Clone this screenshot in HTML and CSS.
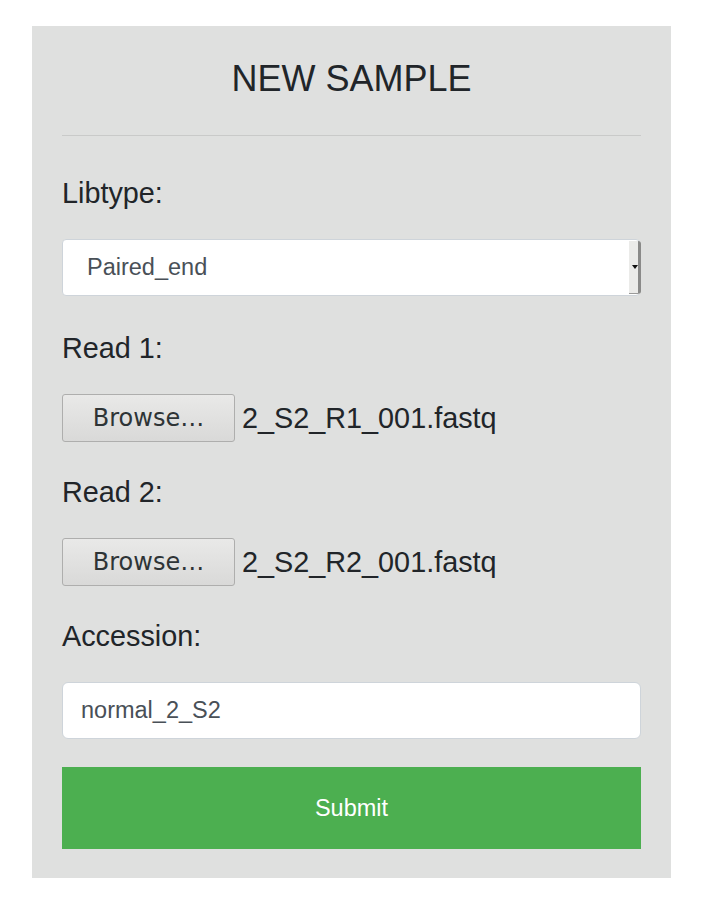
FILE: index.html
```html
<!DOCTYPE html>
<html lang="en">
<head>
<meta charset="utf-8">
<title>New Sample</title>
<link rel="stylesheet" href="styles.css">
</head>
<body>
<form class="card">
  <h1 class="title">NEW SAMPLE</h1>
  <hr class="rule">
  <div class="group group-select">
    <div class="label">Libtype:</div>
    <div class="select">
      <span class="select-value">Paired_end</span>
      <span class="select-arrow"><span class="tri"></span></span>
    </div>
  </div>
  <div class="group group-file">
    <div class="label">Read 1:</div>
    <div class="file">
      <span class="browse">Browse…</span>
      <span class="filename">2_S2_R1_001.fastq</span>
    </div>
  </div>
  <div class="group group-file">
    <div class="label">Read 2:</div>
    <div class="file">
      <span class="browse">Browse…</span>
      <span class="filename">2_S2_R2_001.fastq</span>
    </div>
  </div>
  <div class="group group-input">
    <div class="label">Accession:</div>
    <div class="input">normal_2_S2</div>
  </div>
  <div class="submit">Submit</div>
</form>
</body>
</html>
```
FILE: styles.css
```css
html, body {
  margin: 0;
  padding: 0;
  background: #ffffff;
}
body {
  font-family: "Liberation Sans", Arial, sans-serif;
  color: #212529;
  padding: 26px 30px 0 32px;
}
.card {
  width: 639px;
  box-sizing: border-box;
  background: #dfe0df;
  padding: 31px 30px 29px 30px;
  display: flex;
  flex-direction: column;
}
.title {
  margin: 0;
  font-weight: normal;
  font-size: 36px;
  line-height: 43px;
  text-align: center;
  color: #212529;
}
.rule {
  margin: 35px 0 0 0;
  border: 0;
  border-top: 1px solid #c9cac9;
  height: 0;
}
.group {
  display: flex;
  flex-direction: column;
}
.label {
  font-size: 28.8px;
  line-height: 34px;
  margin-bottom: 29px;
}
.group-select { margin-top: 40px; margin-bottom: 35px; }
.group-file { margin-bottom: 33px; }
.group-input { margin-bottom: 28px; }
.select {
  height: 57px;
  box-sizing: border-box;
  background: #ffffff;
  border: 1px solid #ced4da;
  border-radius: 4px;
  display: flex;
  align-items: center;
  padding-left: 24px;
  position: relative;
  margin-right: 1px;
}
.select-value {
  font-size: 23.5px;
  color: #495057;
  flex: 1;
}
.select-arrow {
  width: 9px;
  align-self: stretch;
  margin: 1px -2px 1px 0;
  background: #ebebe9;
  border-right: 3px solid #8a8a89;
  border-bottom: 1px solid #9a9a99;
  border-radius: 0 3px 3px 0;
  display: flex;
  align-items: center;
  justify-content: flex-end;
}
.tri {
  width: 0;
  height: 0;
  border-left: 3px solid transparent;
  border-right: 3px solid transparent;
  border-top: 4px solid #111;
}
.file {
  display: flex;
  align-items: center;
  height: 48px;
}
.browse {
  width: 173px;
  height: 48px;
  box-sizing: border-box;
  border: 1px solid #aeaead;
  border-radius: 3px;
  background: linear-gradient(#e9e9e8, #d9d9d8);
  font-family: "DejaVu Sans", sans-serif;
  font-size: 24px;
  color: #2e3436;
  display: flex;
  align-items: center;
  justify-content: center;
}
.filename {
  margin-left: 7px;
  font-size: 28.8px;
  color: #212529;
}
.input {
  height: 57px;
  box-sizing: border-box;
  background: #ffffff;
  border: 1px solid #ced4da;
  border-radius: 6px;
  display: flex;
  align-items: center;
  padding-left: 18px;
  font-size: 23.5px;
  color: #495057;
}
.submit {
  height: 82px;
  background: #4caf50;
  color: #ffffff;
  font-size: 23.5px;
  display: flex;
  align-items: center;
  justify-content: center;
}
```
